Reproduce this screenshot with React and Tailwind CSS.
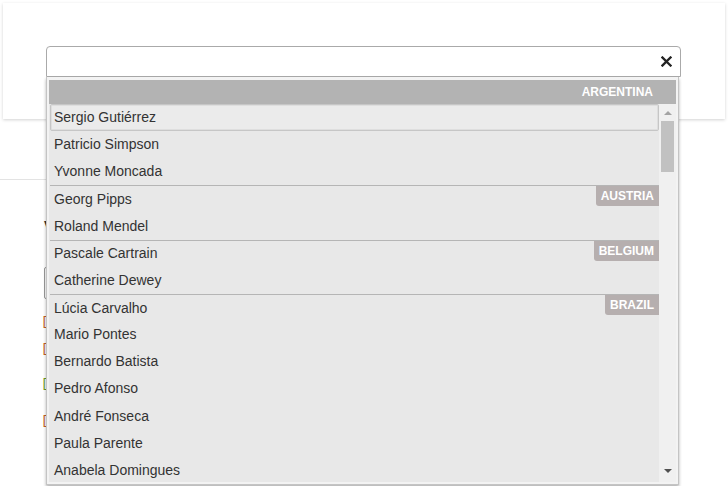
import React from 'react';

const groups = [
  { country: 'Argentina', people: ['Sergio Gutiérrez', 'Patricio Simpson', 'Yvonne Moncada'] },
  { country: 'Austria', people: ['Georg Pipps', 'Roland Mendel'] },
  { country: 'Belgium', people: ['Pascale Cartrain', 'Catherine Dewey'] },
  {
    country: 'Brazil',
    people: ['Lúcia Carvalho', 'Mario Pontes', 'Bernardo Batista', 'Pedro Afonso', 'André Fonseca', 'Paula Parente', 'Anabela Domingues'],
  },
];

function Item({ name, badge, first, selected }) {
  return (
    <div
      className={`flex justify-between h-[27.15px] ${first ? 'border-t border-[#b5b5b5]' : ''} ${
        selected ? 'border border-[#c6c6c6] rounded-[2px] bg-[#ebebeb] shadow-[inset_0_0_0_1px_#dedede]' : ''
      }`}
    >
      <span className={`self-center ${selected ? 'pl-[3px]' : 'pl-[4px]'}`}>{name}</span>
      {badge && (
        <span className="self-start h-[20px] px-[5px] flex items-center bg-[#b6afaf] text-white text-[12px] font-bold uppercase rounded-bl-[3px]">
          {badge}
        </span>
      )}
    </div>
  );
}

export default function App() {
  return (
    <div className="relative min-h-[486px] bg-white overflow-hidden font-['Liberation_Sans',Arial,sans-serif] text-[14px] text-[#333]">
      {/* card behind */}
      <div className="mx-[3px] mt-[3px] h-[116px] bg-white shadow-[0_1px_3px_rgba(0,0,0,0.18)]" />

      {/* page content mostly hidden by the dropdown */}
      <div className="mt-[60px] w-[640px] border-t border-[#e3e3e3]" />
      <div className="pl-[44px] pt-[36px] flex flex-col">
        <div className="font-bold leading-[20px]">Value</div>
        <div className="mt-[31px] h-[32px] w-[400px] border border-[#999] rounded-[2px]" />
        <div className="-ml-[3px] flex flex-col pt-[14px] font-['Liberation_Mono',monospace] text-[13px] leading-[18px]">
          <span className="text-[#c0602a]">[</span>
          <span className="mt-[9px] text-[#c0602a]">[</span>
          <span className="mt-[17px] text-[#6a9a2a]">[</span>
          <span className="mt-[19px] text-[#c0602a]">[</span>
        </div>
      </div>

      {/* open combobox */}
      <div className="absolute left-[46px] top-[46px] w-[635px]">
        <div className="h-[31px] bg-white border border-[#aaa] rounded-t-[4px] flex items-center justify-end pr-[8px]">
          <svg width="11" height="11" viewBox="0 0 11 11">
            <path d="M1.5 1.5 L9.5 9.5 M9.5 1.5 L1.5 9.5" stroke="#222" strokeWidth="2.3" strokeLinecap="square" />
          </svg>
        </div>
        <div className="w-[633px] h-[408px] border border-t-0 border-[#c4c4c4] bg-[#f3f3f3] px-[2px] pt-[3px] pb-[2px] shadow-[0_2px_3px_rgba(0,0,0,0.3)] flex flex-col">
          <div className="h-[24px] shrink-0 bg-[#b3b3b3] text-white text-[12px] font-bold flex items-center justify-end pr-[23px]">
            ARGENTINA
          </div>
          <div className="flex flex-1 min-h-0">
            <div className="w-[610px] bg-[#e8e8e8] pl-[1px] overflow-hidden">
              {groups.map((g, gi) =>
                g.people.map((p, i) => (
                  <Item
                    key={p}
                    name={p}
                    first={gi > 0 && i === 0}
                    badge={gi > 0 && i === 0 ? g.country : null}
                    selected={gi === 0 && i === 0}
                  />
                ))
              )}
            </div>
            <div className="w-[17px] bg-[#f0f0f0] flex flex-col items-center">
              <svg width="8" height="5" viewBox="0 0 8 5" className="mt-[6px]">
                <path d="M0 5 L4 1 L8 5 Z" fill="#a3a3a3" />
              </svg>
              <div className="mt-[6px] w-[13px] h-[51px] bg-[#c1c1c1]" />
              <div className="flex-1" />
              <svg width="8" height="5" viewBox="0 0 8 5" className="mb-[8px]">
                <path d="M0 0 L8 0 L4 4 Z" fill="#505050" />
              </svg>
            </div>
          </div>
        </div>
      </div>
    </div>
  );
}
